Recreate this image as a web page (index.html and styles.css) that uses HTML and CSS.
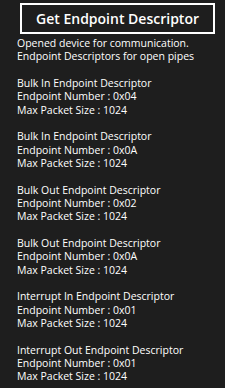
FILE: index.html
```html
<!DOCTYPE html>
<html>
<head>
  <title>Endpoint Descriptors</title>
  <link rel="stylesheet" href="styles.css">
</head>
<body>
  <div class="page">
    <button class="get-button">Get Endpoint Descriptor</button>

    <div class="output">
      <p>Opened device for communication.<br>Endpoint Descriptors for open pipes</p>

      <p>Bulk In Endpoint Descriptor<br>Endpoint Number : 0x04<br>Max Packet Size : 1024</p>

      <p>Bulk In Endpoint Descriptor<br>Endpoint Number : 0x0A<br>Max Packet Size : 1024</p>

      <p>Bulk Out Endpoint Descriptor<br>Endpoint Number : 0x02<br>Max Packet Size : 1024</p>

      <p>Bulk Out Endpoint Descriptor<br>Endpoint Number : 0x0A<br>Max Packet Size : 1024</p>

      <p>Interrupt In Endpoint Descriptor<br>Endpoint Number : 0x01<br>Max Packet Size : 1024</p>

      <p>Interrupt Out Endpoint Descriptor<br>Endpoint Number : 0x01<br>Max Packet Size : 1024</p>
    </div>
  </div>
</body>
</html>
```

FILE: styles.css
```css
html, body {
  margin: 0;
  background: #1e1e1e;
}

body {
  width: 225px;
  height: 388px;
  overflow: hidden;
  color: #ffffff;
  font-family: "Open Sans", "Noto Sans", sans-serif;
}

.page {
  display: flex;
  flex-direction: column;
  padding: 3px 10px 0 17px;
}

.get-button {
  align-self: flex-start;
  margin-left: 3px;
  width: 195px;
  height: 31px;
  padding: 0;
  background: transparent;
  color: #ffffff;
  border: 2px solid #ffffff;
  font-family: "Open Sans", "Noto Sans", sans-serif;
  font-size: 14px;
  font-weight: 600;
}

.output {
  margin-top: 3px;
  font-size: 10.5px;
  line-height: 13.33px;
}

.output p {
  margin: 0 0 13.33px;
  white-space: nowrap;
}
```
